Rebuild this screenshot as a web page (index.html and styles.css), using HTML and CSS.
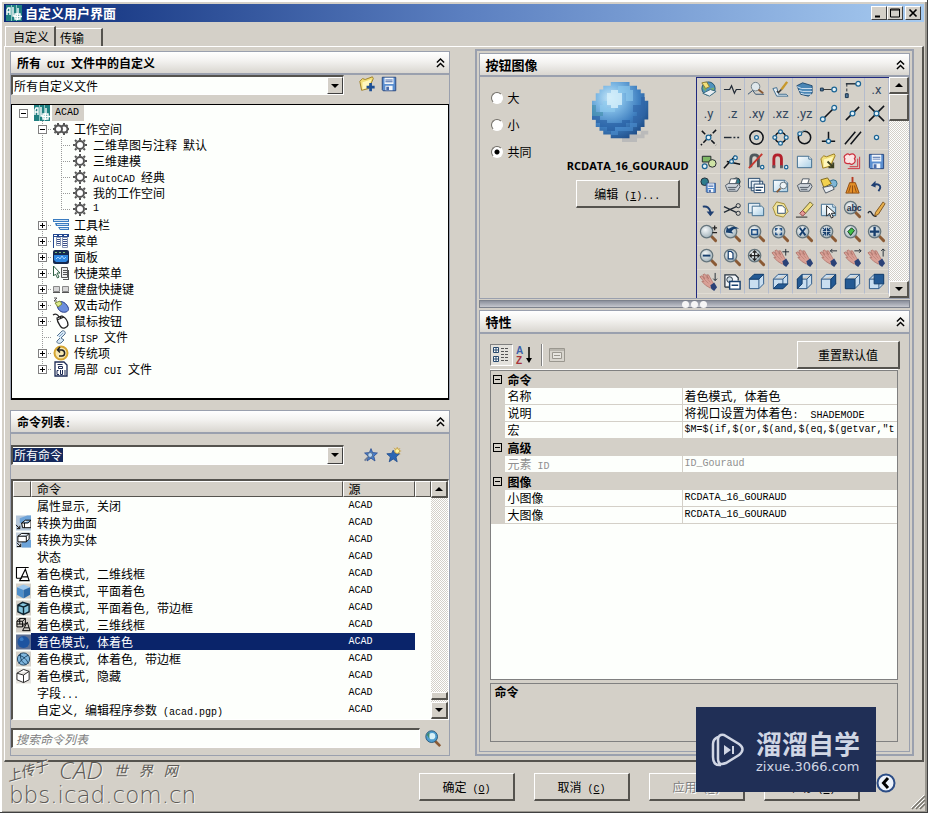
FILE: index.html
```html
<!DOCTYPE html>
<html lang="zh-CN">
<head>
<meta charset="utf-8">
<title>自定义用户界面</title>
<link rel="stylesheet" href="styles.css">
</head>
<body>
<svg class="defs" aria-hidden="true">
  <defs>
    <radialGradient id="ball" cx=".32" cy=".28" r=".8"><stop offset="0" stop-color="#c4e6f8"/><stop offset=".3" stop-color="#7db8e4"/><stop offset=".65" stop-color="#3f7fc0"/><stop offset="1" stop-color="#1f4d88"/></radialGradient>
    <radialGradient id="glass" cx=".4" cy=".35" r=".7"><stop offset="0" stop-color="#f4f7f8"/><stop offset="1" stop-color="#9fb0b8"/></radialGradient>
    <linearGradient id="sheet" x1="0" y1="0" x2="1" y2="1"><stop offset="0" stop-color="#fff"/><stop offset="1" stop-color="#a9cfe6"/></linearGradient>
  </defs>
  <symbol id="acad" viewBox="0 0 16 16"><path fill="#1f7f80" d="M0 0h16v16H0z"/><path fill="#8cc5c2" d="M5 0h1v16H5zM10 0h1v16h-1z"/><path fill="none" stroke="#fff" stroke-width="1.400" d="M1 10V5l1-2h2v7M1 7h3M7 2v9h3M12 3v5M9 9h5v5H9zM11.500 8v7M8 11.500h8"/></symbol>
  <symbol id="gear" viewBox="0 0 16 16"><circle cx="8" cy="8" r="4" fill="#fff" stroke="#555" stroke-width="2"/><path stroke="#555" stroke-width="2" d="M8 1v2M8 13v2M1 8h2M13 8h2M3 3l1.500 1.500M11.500 11.500L13 13M13 3l-1.500 1.500M4.500 11.500L3 13"/></symbol>
  <symbol id="lens" viewBox="0 0 20 20"><path stroke="#8a5a35" stroke-width="3" stroke-linecap="round" d="M13 13l4.500 4.500"/><circle cx="8" cy="8" r="6.500" fill="url(#glass)" stroke="#64747c" stroke-width="1.300"/></symbol>
  <symbol id="hand" viewBox="0 0 20 20"><path fill="#d9a096" stroke="#a8685f" stroke-width=".7" d="M1 5l2-1 3 3-2-4 2-1 4 5-2-4 2 0 4 7 2 3-4 4-5-3-4-4 2 0z"/><path stroke="#b0756c" stroke-width=".6" fill="none" d="M4 6l6 6M7 5l5 6"/><path fill="#2b4277" stroke="none" d="M12 14l4-3 3 5-3 4-3-2z"/></symbol>
  <symbol id="page" viewBox="0 0 20 20"><path fill="url(#sheet)" stroke="#3d6a8d" d="M2.500 4.500h12l3 3v9h-15z"/><path fill="#fff" stroke="#3d6a8d" d="M14.500 4.500v3h3"/></symbol>
  <symbol id="cube" viewBox="0 0 20 20"><path fill="#c9def0" stroke="#2b5787" d="M2.500 7.500l5-5h10v10l-5 5h-10zM2.500 7.500h10l5-5M12.500 7.500v10"/></symbol>
  <symbol id="bluecube" viewBox="0 0 16 16"><path fill="#9cc8ee" d="M1 4l7-3 7 3-7 3z"/><path fill="#4e8fcb" d="M1 4l7 3v9l-7-4z"/><path fill="#2c6aa9" d="M15 4L8 7v9l7-4z"/></symbol>
  <symbol id="printer" viewBox="0 0 20 20"><path fill="#fff" stroke="#4c5561" d="M6 9l2-6h7l-2 6"/><path fill="#cfd5dc" stroke="#4c5561" d="M2.500 10l3-2h11l1.500 3-3 5h-10z"/><path fill="none" stroke="#4c5561" d="M5 12h9l2-3M6 14h7"/></symbol>
  <symbol id="disk" viewBox="0 0 20 20"><path fill="#5b8fd0" stroke="#23427c" d="M2.500 2.500h15v15h-14l-1-1z"/><path fill="#f2f6fb" stroke="none" d="M5 3h10v7H5zM6 12h8v5H6z"/><path fill="#4a6cab" stroke="none" d="M7 13h3v4H7zM6 5h8v1H6zM6 7h8v1H6z"/></symbol>
  <symbol id="folder" viewBox="0 0 20 20"><path fill="#f2df7a" stroke="#9b7b1f" d="M2 7l3-3 3 1 8-3 1 2-5 11-8 2z"/><path fill="#fff7bd" stroke="none" d="M5 8l10-3-4 9-6 2z"/></symbol>
  <symbol id="globe" viewBox="0 0 20 20"><circle cx="10" cy="9" r="7" fill="#4f93bd" stroke="#24546f"/><path fill="#76b06b" stroke="none" d="M5 5l4-2 2 3-3 2-1 4-3-3zM12 9l4-1-1 5-3 1z"/></symbol>
  <symbol id="chev" viewBox="0 0 10 12"><path fill="none" stroke="#000" stroke-width="1.600" d="M1 6l4-4 4 4M1 11l4-4 4 4"/></symbol>
</svg>

<div class="window">
  <header class="titlebar">
    <svg class="i16"><use href="#acad"/></svg>
    <h1>自定义用户界面</h1>
    <div class="caption">
      <button type="button" aria-label="最小化"><svg viewBox="0 0 10 10"><path d="M1 8.500h5" stroke="#000" stroke-width="2"/></svg></button>
      <button type="button" aria-label="最大化"><svg viewBox="0 0 10 10"><path d="M.500 1h9v8h-9zM.500 2h9" fill="none" stroke="#000"/></svg></button>
      <button type="button" class="close" aria-label="关闭"><svg viewBox="0 0 10 10"><path d="M1.500 1.500l7 7M8.500 1.500l-7 7" stroke="#000" stroke-width="1.700"/></svg></button>
    </div>
  </header>

  <nav class="tabs" role="tablist">
    <button type="button" class="tab active" role="tab" aria-selected="true">自定义</button>
    <button type="button" class="tab" role="tab" aria-selected="false">传输</button>
  </nav>

  <main class="sheet">
    <div class="left">
      <section class="group files">
        <div class="head"><h2>所有<span class="en"> CUI </span>文件中的自定义</h2><button type="button" class="fold" aria-label="折叠"><svg><use href="#chev"/></svg></button></div>
        <div class="bar">
          <div class="combo"><select aria-label="自定义文件"><option>所有自定义文件</option></select><span class="drop"></span></div>
          <button type="button" class="tool" aria-label="打开"><svg class="i18" viewBox="0 0 20 20"><use href="#folder"/><path stroke="#1d4f95" stroke-width="3" d="M14 9v9M9.500 13.500h9"/></svg></button>
          <button type="button" class="tool" aria-label="保存"><svg class="i18"><use href="#disk"/></svg></button>
        </div>
        <div class="tree" role="tree">
          <div class="row"><i class="g"><b class="box"></b></i><svg><use href="#acad"/></svg><span class="en sel">ACAD</span></div>
          <div class="row"><i class="g v h"><b class="box"></b></i><svg viewBox="0 0 16 16"><g fill="#fff" stroke="#555" stroke-width="2"><circle cx="11" cy="8" r="3.500"/><circle cx="5.500" cy="8" r="3.500"/><path fill="none" d="M5 2v2M5 12v2M11 2v2M11 12v2M0 8h2M14 8h2M1.500 4l1 1M1.500 12l1-1M14.500 4l-1 1M14.500 12l-1-1"/></g></svg><span>工作空间</span></div>
          <div class="row"><i class="g v"></i><i class="g v h"></i><svg><use href="#gear"/></svg><span>二维草图与注释<span class="en"> </span>默认</span></div>
          <div class="row"><i class="g v"></i><i class="g v h"></i><svg><use href="#gear"/></svg><span>三维建模</span></div>
          <div class="row"><i class="g v"></i><i class="g v h"></i><svg><use href="#gear"/></svg><span><span class="en">AutoCAD </span>经典</span></div>
          <div class="row"><i class="g v"></i><i class="g v h"></i><svg><use href="#gear"/></svg><span>我的工作空间</span></div>
          <div class="row"><i class="g v"></i><i class="g v h last"></i><svg><use href="#gear"/></svg><span class="en">1</span></div>
          <div class="row"><i class="g v h"><b class="box plus"></b></i><svg viewBox="0 0 16 16"><path fill="#3a7cc0" d="M0 2h16v3H0zM2 6h14v3H3zM5 10h11v3H7z"/><path stroke="#cfe2f4" d="M1 3.500h14M4 7.500h11M7 11.500h8"/></svg><span>工具栏</span></div>
          <div class="row"><i class="g v h"><b class="box plus"></b></i><svg viewBox="0 0 16 16"><path fill="#21468f" d="M0 1h16v3H0zM0 3h1v12H0z"/><path fill="#fff" stroke="#8795b5" d="M3.500 4.500h4v8h-4zM9.500 4.500h5v10h-5z"/><path stroke="#3b4f86" d="M4 6.500h3M4 8.500h3M4 10.500h3M10 6.500h4M10 8.500h4M10 10.500h4M10 12.500h4"/><path stroke="#fff" stroke-dasharray="3 2" d="M1 2.500h14"/></svg><span>菜单</span></div>
          <div class="row"><i class="g v h"><b class="box plus"></b></i><svg viewBox="0 0 16 16"><rect y="1" width="16" height="14" rx="2" fill="#16294f"/><path fill="#2f86e0" d="M1 6h14v5l-2 2H3l-2-2z"/><path stroke="#7cc07a" stroke-dasharray="2 2" d="M2 3.500h12"/><path stroke="#9ed0ff" fill="none" d="M3 10l2-2 2 2 2-3 2 3 2-2"/></svg><span>面板</span></div>
          <div class="row"><i class="g v h"><b class="box plus"></b></i><svg viewBox="0 0 16 16"><path fill="#fff" stroke="#2f5f43" d="M.500 1v10l2-2 2 4 1.500-1-2-4h3z"/><path fill="#eee" stroke="#555" d="M8.500 2.500h6v10h-6z"/><path stroke="#555" d="M10 5.500h4M10 7.500h4M10 9.500h4M10 14.500h6M15.500 5v10"/></svg><span>快捷菜单</span></div>
          <div class="row"><i class="g v h"><b class="box plus"></b></i><svg viewBox="0 0 16 16"><path fill="#d7d7d7" stroke="#888" d="M.500 5.500h6v5h-6zM9.500 5.500h6v5h-6z"/><path stroke="#555" d="M0 11.500h7M9 11.500h7"/></svg><span>键盘快捷键</span></div>
          <div class="row"><i class="g v h"><b class="box plus"></b></i><svg viewBox="0 0 16 16"><path fill="none" stroke="#555" d="M1 1h3L1 4h3"/><path fill="#6d8fdc" stroke="#2c4189" d="M4 7c2-4 8-3 11 3 2 4-2 6-6 5-3-1-5-4-5-8z"/><path fill="#dcea8a" stroke="#7d8c3a" d="M2 6l5-2 2 3-4 3z"/></svg><span>双击动作</span></div>
          <div class="row"><i class="g v h"><b class="box plus"></b></i><svg viewBox="0 0 16 16"><path fill="#fff" stroke="#222" stroke-width="1.300" d="M4 5l5-2c4 2 6 6 6 9-1 3-5 4-7 2-2-3-4-5-4-9z"/><path fill="none" stroke="#222" stroke-width="1.300" d="M4 7l7-3M7 3l1 3M0 2c3-2 5 0 6 2"/></svg><span>鼠标按钮</span></div>
          <div class="row"><i class="g v h"></i><svg viewBox="0 0 16 16"><path fill="#d8e8f5" stroke="#53718e" d="M4 7l5-5c2-1 4 1 3 3L8 9l3 2-3 3c-2 1-5 0-4-2l3-3"/><path stroke="#7da3c5" d="M6 8l4-4"/></svg><span><span class="en">LISP </span>文件</span></div>
          <div class="row"><i class="g v h"><b class="box plus"></b></i><svg viewBox="0 0 16 16"><circle cx="8" cy="8" r="6.500" fill="#f7e8b2" stroke="#d5a531" stroke-width="2"/><path fill="none" stroke="#222" stroke-width="1.500" d="M5 5h4c4 1 3 6 0 6H6M7 2L4.500 5 7 7.500"/></svg><span>传统项</span></div>
          <div class="row"><i class="g v h last"><b class="box plus"></b></i><svg viewBox="0 0 16 16"><path fill="#fff" stroke="#1c2b55" stroke-width="1.300" d="M2 1h9l3 3v11H2z"/><path fill="none" stroke="#1c2b55" d="M4.500 3.500h5M5.500 5.500h4v2h-4zM5.500 9.500h-1.500v4h2M7.500 9v4.500h2V9M12 9v5"/></svg><span>局部<span class="en"> CUI </span>文件</span></div>
        </div>
      </section>

      <section class="group commands">
        <div class="head"><h2>命令列表<span class="en">:</span></h2><button type="button" class="fold" aria-label="折叠"><svg><use href="#chev"/></svg></button></div>
        <div class="bar tall">
          <div class="combo focus"><select aria-label="命令类别"><option>所有命令</option></select><span class="drop"></span></div>
          <button type="button" class="tool" aria-label="查找"><svg class="i16" viewBox="0 0 20 20"><path fill="#4a7fca" stroke="#2b4c91" d="M10 2l2 5 6 .5-4.500 4 1.500 6-5-3.500-5 3.500 1.500-6L2 7.500 8 7z"/><circle cx="9" cy="10" r="3" fill="#b9d7f2" stroke="#4b5f7c"/><path stroke="#6b7a94" stroke-width="2" d="M6 13l-4 4"/></svg></button>
          <button type="button" class="tool" aria-label="新建"><svg class="i16" viewBox="0 0 20 20"><path fill="#2b66b4" stroke="#1f4b8c" d="M9 4l2 4 6 .5-4.500 4 1.500 6-5-3.500-5 3.500 1.500-6L1 8.500 7 8z"/><circle cx="14" cy="5" r="3" fill="#fff3a0" stroke="#c39a37"/><path stroke="#c39a37" d="M14 0v2M19 5h-2M17.500 1.500L16 3M10 1l2 2M18 9l-2-2"/></svg></button>
        </div>
        <div class="list">
          <table>
            <colgroup><col class="c-icon"><col><col class="c-src"><col class="c-pad"></colgroup>
            <thead><tr><th></th><th>命令</th><th>源</th><th></th></tr></thead>
            <tbody>
              <tr><td></td><td>属性显示<span class="en">, </span>关闭</td><td class="en">ACAD</td><td></td></tr>
              <tr><td><svg viewBox="0 0 16 16"><path fill="#b5c7da" d="M0 0h16v16H0z"/><path fill="#6ca3d8" d="M4 3l8-3h4v8H4z"/><path fill="#fff" stroke="#000" d="M6 8l4-3h6v8H7zM6 8h7l3-3M9 8v5M0 10l4 4M1 14h3v-3"/></svg></td><td>转换为曲面</td><td class="en">ACAD</td><td></td></tr>
              <tr><td><svg viewBox="0 0 16 16"><path fill="#c2cedb" d="M0 0h16v16H0z"/><path fill="#6ca3d8" d="M6 8h10v8H6z"/><path fill="#fff" stroke="#000" d="M2 4l4-3h8v6l-3 3H2zM2 4h9l3-3M11 4v6M1 11l4 4M1 15h4v-3"/></svg></td><td>转换为实体</td><td class="en">ACAD</td><td></td></tr>
              <tr><td></td><td>状态</td><td class="en">ACAD</td><td></td></tr>
              <tr><td><svg viewBox="0 0 16 16"><path fill="#fff" stroke="#000" stroke-width="1.200" d="M.500 12.500V1h13M.500 12.500h6M4 15L10 3l4 12zM6 11h7"/></svg></td><td>着色模式<span class="en">, </span>二维线框</td><td class="en">ACAD</td><td></td></tr>
              <tr><td><svg viewBox="0 0 16 16"><path fill="#d4d0c8" d="M0 0h16v16H0z"/><use href="#bluecube"/></svg></td><td>着色模式<span class="en">, </span>平面着色</td><td class="en">ACAD</td><td></td></tr>
              <tr><td><svg viewBox="0 0 16 16"><path fill="#d4d0c8" d="M0 0h16v16H0z"/><path fill="#85c4dc" stroke="#0e2430" stroke-width="1.500" d="M2 5l5-3 7 2v8l-6 3-6-3zM2 5l6 2v8M8 7l6-3"/></svg></td><td>着色模式<span class="en">, </span>平面着色<span class="en">, </span>带边框</td><td class="en">ACAD</td><td></td></tr>
              <tr><td><svg viewBox="0 0 16 16"><path fill="#d4d0c8" d="M0 0h16v16H0z"/><path fill="none" stroke="#000" d="M1 4l3-3h6v6l-3 3H1zM1 4h6l3-3M7 4v6M4 1v6H1M4 7h6M7 14l5-9 3 9zM9 11h5"/></svg></td><td>着色模式<span class="en">, </span>三维线框</td><td class="en">ACAD</td><td></td></tr>
              <tr class="current"><td><svg viewBox="0 0 16 16"><path fill="#5d6f92" d="M0 0h16v16H0z"/><circle cx="8" cy="8" r="6.500" fill="#1d54a0"/><circle cx="6" cy="5" r="2" fill="#3d7cc4"/></svg></td><td>着色模式<span class="en">, </span>体着色</td><td class="en">ACAD</td><td></td></tr>
              <tr><td><svg viewBox="0 0 16 16"><path fill="#d4d0c8" d="M0 0h16v16H0z"/><circle cx="8" cy="8" r="6.500" fill="#7fb6de" stroke="#1c4262"/><path fill="none" stroke="#1c4262" d="M3 4c5 1 9 5 10 9M13 4c-4 2-8 5-10 9M5 2c-1 5 1 10 6 12"/></svg></td><td>着色模式<span class="en">, </span>体着色<span class="en">, </span>带边框</td><td class="en">ACAD</td><td></td></tr>
              <tr><td><svg viewBox="0 0 16 16"><path fill="#e6e4df" d="M0 0h16v16H0z"/><path fill="#fff" stroke="#222" d="M1 5l7-4 6 2v9l-6 3-7-3zM1 5l7 2 6-4M8 7v8"/></svg></td><td>着色模式<span class="en">, </span>隐藏</td><td class="en">ACAD</td><td></td></tr>
              <tr><td></td><td>字段<span class="en">...</span></td><td class="en">ACAD</td><td></td></tr>
              <tr><td></td><td>自定义<span class="en">, </span>编辑程序参数<span class="en"> (acad.pgp)</span></td><td class="en">ACAD</td><td></td></tr>
            </tbody>
          </table>
          <div class="scroll end"><span class="arrow up"></span><span class="thumb"></span><span class="arrow down"></span></div>
        </div>
        <div class="search">
          <input type="text" placeholder="搜索命令列表" aria-label="搜索命令列表">
          <button type="button" class="tool" aria-label="搜索"><svg class="i18" viewBox="0 0 20 20"><path stroke="#8a5a35" stroke-width="3" d="M12 13l6 6"/><circle cx="8.500" cy="8.500" r="6.500" fill="#4f9ed0" stroke="#245476"/><circle cx="9" cy="8" r="3.500" fill="#d7f0f8"/><path fill="#3f8a72" d="M3 6l3-3v8z"/></svg></button>
        </div>
      </section>
    </div>

    <div class="right">
      <section class="group image">
        <div class="head"><h2>按钮图像</h2><button type="button" class="fold" aria-label="折叠"><svg><use href="#chev"/></svg></button></div>
        <div class="imgbody">
          <div class="radios">
            <label><input type="radio" name="size">大</label>
            <label><input type="radio" name="size">小</label>
            <label><input type="radio" name="size" checked>共同</label>
          </div>
          <div class="preview">
            <svg class="sphere" viewBox="0 0 64 64"><path fill="#a9acb0" opacity=".6" d="M32 56h20v-4h8v4h-4v4h-8v4H32z"/><path fill="url(#ball)" d="M20 0h20v4h8v4h4v4h4v8h4v20h-4v8h-4v4h-4v4h-8v4H20v-4h-8v-4H8v-4H4v-8H0V20h4v-8h4V8h4V4h8z"/><g shape-rendering="crispEdges"><path fill="#d6f0fb" opacity=".8" d="M20 8h8v4h4v12h-4v4h-8v-4h-4V12h4z"/><path fill="#8fcbee" opacity=".6" d="M28 4h12v4h4v12h-8v-8h-8zM12 20h4v8h8v4H8v-8h4z"/><path fill="#245a9f" opacity=".6" d="M0 36h8v4h8v4h16v-4h8v4h-4v4H24v4h-8v-4H8v-4H4v-4H0z"/><path fill="#3a8aa0" opacity=".5" d="M0 24h4v8h8v4H0z"/><path fill="#2f63a5" opacity=".6" d="M44 24h8v-8h4v20h-4v8h-8v-8h4v-4h-4z"/><path fill="#4d90d0" opacity=".6" d="M24 48h16v-4h8v4h-4v4H28v4h-8v-4h4z"/></g></svg>
            <p class="name">RCDATA_16_GOURAUD</p>
            <button type="button" class="btn edit">编辑<span class="en"> (<u>I</u>)...</span></button>
          </div>
          <div class="palette">
            <button type="button"><svg viewBox="0 0 20 20"><use href="#globe"/><path fill="#f2df7a" stroke="#8b7b35" d="M3 3l5-1 3 5-4 2z"/><path fill="#e8eef2" stroke="#3a6a80" d="M4 14l8-4 6 2-7 5z"/></svg></button>
            <button type="button"><svg viewBox="0 0 20 20"><path stroke-width="1.300" d="M1 10h6l2-4 3 8 2-4h5"/></svg></button>
            <button type="button"><svg viewBox="0 0 20 20"><circle cx="9" cy="7" r="4.500" fill="#dfe8ec" stroke="#6d7d86"/><path stroke="#8a5a35" stroke-width="2" d="M12 10l5 4"/><path stroke="#34506e" d="M1 15l5-4 3 4h9"/></svg></button>
            <button type="button"><svg viewBox="0 0 20 20"><path fill="#e7f0f6" stroke="#3d6a8d" d="M2 9l4-1 2 7h8l2 2H6z"/><path stroke="#c7982c" stroke-width="2.500" d="M17 2l-6 8"/><path stroke="#333" stroke-width="1.500" d="M11 10l-3 3-2-1"/></svg></button>
            <button type="button"><svg viewBox="0 0 20 20"><path fill="#4a86b5" stroke="#224c72" d="M2 6l6-3 10 3v8l-4 3-8-2z"/><path stroke="#d7e7f2" d="M2 7l5 2h11M4 11l4 1h10M6 14l4 1h7"/></svg></button>
            <button type="button"><svg viewBox="0 0 20 20"><path d="M3 10h12" stroke="#333"/><path fill="#4d7598" stroke="#17324c" d="M1.500 8.500h3v3h-3z"/><circle class="n" cx="16" cy="10" r="2.500"/></svg></button>
            <button type="button"><svg viewBox="0 0 20 20"><path stroke-dasharray="3 2" d="M4 4v11"/><path stroke-width="1.500" d="M3 4h12"/><path fill="#4d7598" stroke="#17324c" d="M2.500 14.500h3v4h-3z"/><circle class="n" cx="16" cy="4" r="2.500"/></svg></button>
            <button type="button">.x</button>

            <button type="button">.y</button>
            <button type="button">.z</button>
            <button type="button">.xy</button>
            <button type="button">.xz</button>
            <button type="button">.yz</button>
            <button type="button"><svg viewBox="0 0 20 20"><path class="k" d="M5 15L15 5"/><circle class="n" cx="4" cy="16" r="2.500"/><circle class="n" cx="16" cy="4" r="2.500"/></svg></button>
            <button type="button"><svg viewBox="0 0 20 20"><path class="k" d="M3 17L17 3"/><circle class="n" cx="10" cy="10" r="2.500"/></svg></button>
            <button type="button"><svg viewBox="0 0 20 20"><path class="k" d="M2 2l16 16M18 2L2 18"/><circle class="n" cx="10" cy="10" r="2.500"/></svg></button>

            <button type="button"><svg viewBox="0 0 20 20"><path class="k" stroke-dasharray="5 2" d="M3 3l15 15M18 2L2 18"/><circle class="n" cx="10" cy="10" r="2.500"/></svg></button>
            <button type="button"><svg viewBox="0 0 20 20"><path d="M1 10h8" stroke-width="1.500"/><path stroke-dasharray="2 2" stroke-width="1.500" d="M11 10h8"/></svg></button>
            <button type="button"><svg viewBox="0 0 20 20"><circle class="k" cx="10" cy="10" r="7"/><circle class="n" cx="10" cy="10" r="2"/></svg></button>
            <button type="button"><svg viewBox="0 0 20 20"><circle class="k" cx="10" cy="10" r="5.500"/><circle class="n" cx="10" cy="4" r="2"/><circle class="n" cx="10" cy="16" r="2"/><circle class="n" cx="4" cy="10" r="2"/><circle class="n" cx="16" cy="10" r="2"/></svg></button>
            <button type="button"><svg viewBox="0 0 20 20"><circle class="k" cx="10" cy="10" r="6.500"/><circle class="n" cx="5" cy="6" r="2"/><path stroke="#7fb0c6" d="M5 5l6-3"/></svg></button>
            <button type="button"><svg viewBox="0 0 20 20"><path class="k" d="M3 14h14M10 4v8"/><circle class="n" cx="10" cy="14" r="2.200"/></svg></button>
            <button type="button"><svg viewBox="0 0 20 20"><path class="k" d="M2 17L13 4M8 17L19 4"/></svg></button>
            <button type="button"><svg viewBox="0 0 20 20"><circle class="n" cx="10" cy="10" r="2.200"/></svg></button>

            <button type="button"><svg viewBox="0 0 20 20"><path fill="#7fb865" stroke="#20242a" d="M3.500 4.500h9v6h-9z"/><circle cx="14" cy="12" r="4" fill="#cfe3a5" stroke="#20242a"/><circle class="n" cx="6" cy="15" r="2.500"/></svg></button>
            <button type="button"><svg viewBox="0 0 20 20"><path stroke="#10141a" stroke-width="1.600" d="M1 17L13 4M4 10l14 3"/><circle class="n" cx="13" cy="6" r="2"/><circle class="n" cx="9" cy="10" r="2"/></svg></button>
            <button type="button"><svg viewBox="0 0 20 20"><path stroke="#4e575c" stroke-width="3" d="M4 16V7q0-4 4-4t4 4v9"/><path stroke="#c5372f" stroke-width="2" d="M2 17L16 2"/><circle class="n" cx="16" cy="16" r="1.800"/></svg></button>
            <button type="button"><svg viewBox="0 0 20 20"><path stroke="#b3202a" stroke-width="3" d="M3 16V7q0-4 4-4t4 4v9"/><path stroke="#5c6166" stroke-width="3" d="M3 14v3M11 14v3"/><circle class="n" cx="16" cy="16" r="1.800"/></svg></button>
            <button type="button"><svg><use href="#page"/></svg></button>
            <button type="button"><svg viewBox="0 0 20 20"><use href="#folder"/><path stroke="#3c3f20" stroke-width="2" d="M9 10l6 6M15 11v5h-5"/></svg></button>
            <button type="button"><svg viewBox="0 0 20 20"><path stroke="#cc2f3d" d="M17.500 5v12.500H5M15.500 7v8.500H7"/><path fill="#fbe4e4" stroke="#cc2f3d" stroke-width="1.300" d="M3 3q2-2 4 0 3-2 5 0 2 2 0 4 2 3-1 5-2 2-4 0-3 1-5-1-1-2 0-4-2-2 1-4z"/></svg></button>
            <button type="button"><svg><use href="#disk"/></svg></button>

            <button type="button"><svg viewBox="0 0 20 20"><circle cx="6" cy="6" r="4" fill="#2d7c8c"/><svg x="6" y="6" width="13" height="13"><use href="#disk"/></svg></svg></button>
            <button type="button"><svg viewBox="0 0 20 20"><circle cx="14" cy="6" r="4" fill="#2d7c8c"/><use href="#printer"/></svg></button>
            <button type="button"><svg viewBox="0 0 20 20"><path fill="#e4edf4" stroke="#26486c" d="M1.500 2.500h12v10h-12zM4.500 5.500h12v10h-12z"/><path fill="#fff" stroke="#26486c" d="M7.500 8.500h11v9h-11z"/><path stroke="#26486c" stroke-width="1.500" d="M9 12h8M9 15h6"/></svg></button>
            <button type="button"><svg viewBox="0 0 20 20"><use href="#page"/><circle cx="13" cy="10" r="3.500" fill="#eef4f7" stroke="#66757d"/><path stroke="#8a5a35" stroke-width="2" d="M10 13l-4 4"/></svg></button>
            <button type="button"><svg><use href="#printer"/></svg></button>
            <button type="button"><svg viewBox="0 0 20 20"><circle cx="15" cy="8" r="4" fill="#7fb6d6" stroke="#2d6a86"/><path fill="#f2d14f" stroke="#7d661b" d="M2 4l7-2 4 6-8 4z"/><path fill="#e9edf1" stroke="#4c5561" d="M4 12l10-2 2 4-9 4z"/></svg></button>
            <button type="button"><svg viewBox="0 0 20 20"><path stroke="#b63b22" stroke-width="2" d="M10 1v6"/><path fill="#e38f28" stroke="#8e4c12" d="M7 7h6l4 11H3z"/><path stroke="#8e4c12" d="M8 10L6 17M10 10v8M12 10l2 7"/></svg></button>
            <button type="button"><svg viewBox="0 0 20 20"><path stroke="#1f3f72" stroke-width="2" d="M12 16q4-5 0-7-3-1-5 1"/><path fill="#1f3f72" stroke="none" d="M4 10l5-5v7z"/></svg></button>

            <button type="button"><svg viewBox="0 0 20 20"><path stroke="#1f3f72" stroke-width="2" d="M4 7q7-1 8 6"/><path fill="#1f3f72" stroke="none" d="M8 12h8l-4 5z"/></svg></button>
            <button type="button"><svg viewBox="0 0 20 20"><path stroke-width="1.300" d="M1 7l13 6M1 13l13-6"/><circle cx="16" cy="6" r="2.200"/><circle cx="16" cy="14" r="2.200"/></svg></button>
            <button type="button"><svg viewBox="0 0 20 20"><path fill="#e4edf4" stroke="#3d6a8d" d="M1.500 3.500h12v10h-12z"/><path fill="url(#sheet)" stroke="#3d6a8d" d="M5.500 6.500h10l2 2v8h-12z"/></svg></button>
            <button type="button"><svg viewBox="0 0 20 20"><path fill="#f0e39c" stroke="#a28b32" d="M6 2l8 2 4 8-5 6-8-2-3-8z"/><path fill="#fff" stroke="#34506e" d="M7 6h5l3 3v5H7z"/></svg></button>
            <button type="button"><svg viewBox="0 0 20 20"><path stroke="#222" d="M1 18h12"/><path fill="#f0dd80" stroke="#6d6630" d="M8 11l8-9 3 3-8 9z"/><path fill="#e79a98" stroke="#8c4543" d="M5 14l3-3 3 3-3 3z"/></svg></button>
            <button type="button"><svg viewBox="0 0 20 20"><use href="#page"/><path fill="#fff" stroke="#222" d="M8 6v11l3-3 2 5 2-1-2-4h4z"/></svg></button>
            <button type="button"><svg viewBox="0 0 20 20"><use href="#lens"/><text x="4" y="12" class="abc">abc</text></svg></button>
            <button type="button"><svg viewBox="0 0 20 20"><path stroke-width="1.500" d="M1 14q2-4 4 0t5 3"/><path fill="#e9b04c" stroke="#7d5420" d="M9 13l8-11 2 2-7 11-4 2z"/></svg></button>

            <button type="button"><svg viewBox="0 0 20 20"><use href="#lens"/><path stroke="#222" stroke-width="1.300" d="M14 4h5M16.500 1.500v5M14 9h5"/></svg></button>
            <button type="button"><svg viewBox="0 0 20 20"><use href="#lens"/><path fill="#173f6e" stroke="none" d="M3 9l1-6 2 2q6-4 11 0-6-1-8 3l2 2z"/></svg></button>
            <button type="button"><svg viewBox="0 0 20 20"><use href="#lens"/><path stroke="#1f4f86" stroke-width="1.500" d="M5 6h6v5H5z"/></svg></button>
            <button type="button"><svg viewBox="0 0 20 20"><use href="#lens"/><path stroke="#1f4f86" stroke-width="1.500" d="M5 7V5h2M9 5h2v2M11 9v2H9M7 11H5V9"/></svg></button>
            <button type="button"><svg viewBox="0 0 20 20"><use href="#lens"/><path stroke="#173f6e" stroke-width="2" d="M5 4l6 8M11 4l-6 8"/></svg></button>
            <button type="button"><svg viewBox="0 0 20 20"><use href="#lens"/><path stroke="#173f6e" stroke-width="1.200" d="M4 4l3 3M12 4L9 7M4 12l3-3M12 12L9 9M4 7h3V4M9 4v3h3M4 9h3v3M9 12V9h3"/></svg></button>
            <button type="button"><svg viewBox="0 0 20 20"><use href="#lens"/><path fill="#3fbf4a" stroke="#10351a" d="M5 8l4-4 3 3-4 5z"/></svg></button>
            <button type="button"><svg viewBox="0 0 20 20"><use href="#lens"/><path stroke="#173f6e" stroke-width="2.500" d="M3 8h10M8 3v10"/></svg></button>

            <button type="button"><svg viewBox="0 0 20 20"><use href="#lens"/><path stroke="#173f6e" stroke-width="2" d="M4 8h8"/></svg></button>
            <button type="button"><svg viewBox="0 0 20 20"><use href="#lens"/><path fill="#fff" stroke="#173f6e" stroke-width="1.300" d="M5.500 3.500h3l2 2v6h-5z"/></svg></button>
            <button type="button"><svg viewBox="0 0 20 20"><use href="#lens"/><path stroke="#222" stroke-width="1.200" d="M3 8h10M8 3v10M6 5l2-2 2 2M6 11l2 2 2-2M5 6L3 8l2 2M11 6l2 2-2 2"/></svg></button>
            <button type="button"><svg viewBox="0 0 20 20"><use href="#hand"/><path d="M12 4h7M15.500 1v7"/></svg></button>
            <button type="button"><svg><use href="#hand"/></svg></button>
            <button type="button"><svg viewBox="0 0 20 20"><use href="#hand"/><path d="M12 3h7M14 1l-2 2 2 2"/></svg></button>
            <button type="button"><svg viewBox="0 0 20 20"><use href="#hand"/><path d="M12 3h7M17 1l2 2-2 2"/></svg></button>
            <button type="button"><svg viewBox="0 0 20 20"><use href="#hand"/><path d="M17 1v8M15 3l2-2 2 2"/></svg></button>

            <button type="button"><svg viewBox="0 0 20 20"><use href="#hand"/><path d="M17 1v8M15 7l2 2 2-2"/></svg></button>
            <button type="button"><svg viewBox="0 0 20 20"><path fill="#f2f5f8" stroke="#23303d" stroke-width="1.300" d="M2 16V3h11l3 3v3M2 16h5"/><circle cx="7" cy="8" r="3" fill="#cfdde6" stroke="#23303d"/><path fill="#fff" stroke="#173f6e" stroke-width="1.500" d="M7 10h11v8H7zM9 14h7"/></svg></button>
            <button type="button"><svg viewBox="0 0 20 20"><use href="#cube"/><path class="f" d="M2.500 7.500l5-5h10l-5 5z"/></svg></button>
            <button type="button"><svg viewBox="0 0 20 20"><use href="#cube"/><path class="f" d="M2.500 17.500l5-5h10l-5 5z"/></svg></button>
            <button type="button"><svg viewBox="0 0 20 20"><use href="#cube"/><path class="f" d="M2.500 7.500l5-5v10l-5 5z"/></svg></button>
            <button type="button"><svg viewBox="0 0 20 20"><use href="#cube"/><path class="f" d="M12.500 7.500l5-5v10l-5 5z"/></svg></button>
            <button type="button"><svg viewBox="0 0 20 20"><use href="#cube"/><path class="f" d="M2.500 7.500h10v10h-10z"/></svg></button>
            <button type="button"><svg viewBox="0 0 20 20"><use href="#cube"/><path class="f" d="M7.500 2.500h10v10h-10z"/></svg></button>
          </div>
          <div class="scroll"><span class="arrow up"></span><span class="thumb big"></span><span class="arrow down"></span></div>
        </div>
      </section>

      <div class="splitter"><i></i><i></i><i></i></div>

      <section class="group props">
        <div class="head"><h2>特性</h2><button type="button" class="fold" aria-label="折叠"><svg><use href="#chev"/></svg></button></div>
        <div class="propbody">
          <div class="ptools">
            <button type="button" class="pt on" aria-label="按分类"><svg viewBox="0 0 20 20"><path fill="#fff" stroke="#26486c" d="M2.500 2.500h5v5h-5zM2.500 11.500h5v5h-5z"/><path stroke="#26486c" d="M3 5h4M5 3v4M3 14h4M5 12v4"/><path stroke="#555" stroke-dasharray="3 1" d="M10 3.500h8M10 6.500h8M10 9.500h8M10 12.500h8M10 15.500h8"/></svg></button>
            <button type="button" class="pt" aria-label="按字母"><svg viewBox="0 0 20 20"><text x="2" y="9" class="la">A</text><text x="2" y="19" class="lz">Z</text><path stroke="#000" stroke-width="1.500" d="M15 2v14"/><path d="M12 13h6l-3 5z"/></svg></button>
            <span class="sep"></span>
            <button type="button" class="pt" aria-label="属性页" disabled><svg viewBox="0 0 20 20"><path fill="#d8d5ce" stroke="#9a978f" d="M2.500 3.500h15v13h-15z"/><path fill="#e8e6e1" stroke="#9a978f" d="M5.500 7.500h9v6h-9zM7 10.500h6M3 5h14"/></svg></button>
            <button type="button" class="btn reset">重置默认值</button>
          </div>
          <div class="pgrid">
            <table>
              <colgroup><col class="p-gut"><col class="p-name"><col></colgroup>
              <tbody>
                <tr class="cat"><th><b class="box"></b></th><th colspan="2">命令</th></tr>
                <tr><th></th><td>名称</td><td>着色模式<span class="en">, </span>体着色</td></tr>
                <tr><th></th><td>说明</td><td>将视口设置为体着色<span class="en">:  SHADEMODE</span></td></tr>
                <tr><th></th><td>宏</td><td class="en">$M=$(if,$(or,$(and,$(eq,$(getvar,"t</td></tr>
                <tr class="cat"><th><b class="box"></b></th><th colspan="2">高级</th></tr>
                <tr class="off"><th></th><td>元素<span class="en"> ID</span></td><td class="en">ID_Gouraud</td></tr>
                <tr class="cat"><th><b class="box"></b></th><th colspan="2">图像</th></tr>
                <tr><th></th><td>小图像</td><td class="en">RCDATA_16_GOURAUD</td></tr>
                <tr><th></th><td>大图像</td><td class="en">RCDATA_16_GOURAUD</td></tr>
              </tbody>
            </table>
          </div>
          <div class="desc">命令</div>
        </div>
      </section>
    </div>
  </main>

  <footer class="footer">
    <button type="button" class="btn">确定<span class="en"> (<u>O</u>)</span></button>
    <button type="button" class="btn">取消<span class="en"> (<u>C</u>)</span></button>
    <button type="button" class="btn" disabled>应用<span class="en"> (<u>A</u>)</span></button>
    <button type="button" class="btn">帮助<span class="en"> (<u>H</u>)</span></button>
    <button type="button" class="round" aria-label="收起"><svg viewBox="0 0 20 20"><circle cx="10" cy="10" r="8.500" fill="#eef3fb" stroke="#2b4c86" stroke-width="2"/><path fill="none" stroke="#000" stroke-width="3" d="M12 5l-4.500 5 4.500 5"/></svg></button>
  </footer>

  <div class="sign"><p class="script"><span class="tilt">上传于</span><span class="cad">CAD</span><span>世</span><span>界</span><span>网</span></p><p class="site">bbs.icad.com.cn</p></div>
  <div class="badge">
    <svg viewBox="0 0 36 36"><path fill="none" stroke="#d0d6e4" stroke-width="2.500" d="M8 8q0-6 6-5l15 9q7 5 0 11l-13 8q-8 3-8-4zM8 5q-5 2-5 7v13q0 9 8 8"/><path fill="#d0d6e4" d="M14 13l7 5-7 5zM22 14h2v8h-2z"/></svg>
    <div><strong>溜溜自学</strong><span>zixue.3066.com</span></div>
  </div>
  <svg class="grip" viewBox="0 0 14 14"><path stroke="#77746d" stroke-width="1.500" d="M1 14L14 1M5 14l9-9M9 14l5-5"/><path stroke="#fff" d="M0 13L13 0M4 13l9-9M8 13l5-5"/></svg>
</div>
</body>
</html>
```
FILE: styles.css
```css
:root {
  --face: #d4d0c8;
  --line: #9aa0ae;
  --dark: #55534e;
  --navy: #0a246a;
  --paper: #fdfffc;
}
* { box-sizing: border-box; }
body {
  margin: 0;
  background: var(--face);
  color: #000;
  font: 12px/16px "Noto Sans CJK SC", sans-serif;
}
h1, h2, p { margin: 0; }
button, input, select { font: inherit; color: inherit; margin: 0; padding: 0; }
button { border: 0; background: none; }
svg { display: block; flex: none; overflow: visible; }
.defs { position: absolute; width: 0; height: 0; }
.en { font-family: "Liberation Mono", monospace; font-size: 10px; white-space: pre; }
span.en { line-height: 1; }
.i16 { width: 16px; height: 16px; }
.i18 { width: 18px; height: 18px; }

.window {
  position: relative;
  display: flex;
  flex-direction: column;
  min-height: 100vh;
  padding: 4px 3px 2px 4px;
  border-right: 1px solid #404040;
  border-bottom: 1px solid #404040;
  box-shadow: inset 2px 2px #fff, inset -2px -1px #99968f;
}

.titlebar {
  display: flex;
  align-items: center;
  height: 18px;
  padding: 0 3px 0 2px;
  background: linear-gradient(90deg, #0a2a78, #5b7fc0 50%, #a6caf0);
  color: #fff;
}
.titlebar h1 { flex: 1; padding-left: 3px; font-size: 13px; line-height: 18px; }
.caption { display: flex; }
.caption button {
  width: 16px; height: 14px;
  display: grid; place-items: center;
  background: var(--face);
  border: 1px solid;
  border-color: #fff #404040 #404040 #fff;
}
.caption .close { margin-left: 2px; }
.caption svg { width: 10px; height: 10px; }

.tabs { display: flex; align-items: flex-end; height: 24px; padding-left: 1px; }
.tab {
  height: 18px;
  padding: 0 17px 0 4px;
  border: 1px solid;
  border-width: 1px 2px 0 0;
  border-color: #fff var(--dark) #fff #fff;
}
.tab.active { height: 20px; padding: 0 5px 0 7px; border-left-width: 1px; }

.sheet {
  flex: 1;
  display: grid;
  grid-template-columns: minmax(0, 1fr) minmax(0, 1fr);
  gap: 25px;
  padding: 4px 8px 4px 5px;
  border: 1px solid;
  border-width: 1px 2px 2px 1px;
  border-color: #fff var(--dark) var(--dark) #fff;
}
.left { display: flex; flex-direction: column; gap: 10px; }
.group { display: flex; flex-direction: column; border: 1px solid var(--line); }
.files { flex: 1; border-bottom: 0; }
.head {
  display: flex;
  align-items: center;
  justify-content: space-between;
  height: 23px;
  padding: 0 4px 0 6px;
  background: linear-gradient(#fff, #f4f3f1 40%, #d9d6d0);
  border-bottom: 2px solid var(--line);
}
.head h2 { font-size: 12px; line-height: 20px; }
.right .head h2 { font-size: 13px; }
.fold svg { width: 9px; height: 11px; }

.bar { display: flex; align-items: flex-start; height: 29px; }
.bar.tall { align-items: center; height: 45px; padding-bottom: 4px; }
.tool { margin-left: 4px; }
.combo + .tool { margin-left: 14px; }
.tall .combo + .tool { margin-left: 19px; }
.tall .tool { margin-left: 7px; }
.combo {
  display: flex;
  width: 76%;
  height: 20px;
  background: var(--paper);
  border: 1px solid;
  border-width: 2px 1px 1px 2px;
  border-color: var(--dark) #fff #fff var(--dark);
}
.combo select {
  flex: 1;
  align-self: center;
  appearance: none;
  height: 14px;
  border: 0;
  padding-left: 1px;
  background: none;
  line-height: 14px;
}
.combo.focus select { flex: none; background: #15295c; color: #fff; }
.drop {
  width: 16px;
  margin-left: auto;
  background: var(--face);
  border: 1px solid;
  border-color: #fff #404040 #404040 #fff;
  display: grid;
  place-items: center;
}
.drop::after, .arrow::after {
  content: "";
  border: 4px solid transparent;
  border-bottom-width: 0;
  border-top-color: #000;
}
.arrow.up::after { transform: rotate(180deg); }

.tree {
  flex: 1;
  padding-left: 2px;
  background: var(--paper);
  border: 1px solid #000;
  border-bottom-width: 2px;
}
.row { display: flex; align-items: center; height: 16px; }
.row + .row { padding-left: 19px; }
.row > svg { width: 16px; height: 16px; margin: 0 5px 0 1px; }
.row .sel { background: var(--face); margin-left: -3px; padding: 0 5px 0 3px; }
.row > span { line-height: 16px; }
.g {
  width: 19px; height: 16px;
  display: grid;
  place-items: center;
  background-repeat: no-repeat;
}
.g.v { background-image: repeating-linear-gradient(#999 0 1px, transparent 1px 2px); background-size: 1px 16px; background-position: 9px 0; }
.g.v.h {
  background-image: repeating-linear-gradient(#999 0 1px, transparent 1px 2px), repeating-linear-gradient(90deg, #999 0 1px, transparent 1px 2px);
  background-size: 1px 16px, 10px 1px;
  background-position: 9px 0, 9px 8px;
}
.g.v.h.last { background-size: 1px 8px, 10px 1px; }
.box {
  display: block;
  width: 9px; height: 9px;
  border: 1px solid #808080;
  background: linear-gradient(#000, #000) center / 5px 1px no-repeat, #fff;
}
.box.plus { background: linear-gradient(#000, #000) center / 5px 1px no-repeat, linear-gradient(#000, #000) center / 1px 5px no-repeat, #fff; }

.list {
  display: flex;
  height: 241px;
  background: var(--paper);
  border: 1px solid;
  border-width: 2px 1px 1px 2px;
  border-color: var(--dark) #fff #fff var(--dark);
}
table { border-collapse: separate; border-spacing: 0; table-layout: fixed; width: 100%; }
.list table { flex: 1; width: auto; align-self: flex-start; }
.c-icon { width: 18px; }
.c-src { width: 72px; }
.c-pad { width: 16px; }
th, td { padding: 0; text-align: left; overflow: hidden; white-space: nowrap; line-height: 16px; }
.list th {
  height: 16px;
  padding-left: 5px;
  font-weight: normal;
  line-height: 14px;
  background: var(--face);
  border: 1px solid;
  border-color: #fff var(--dark) var(--dark) #fff;
}
.list td { height: 17px; padding-left: 6px; }
.list td:first-child { padding-left: 3px; }
.list td svg { width: 15px; height: 16px; }
.current td:nth-child(2), .current td:nth-child(3) { background: var(--navy); color: #fff; }

.scroll {
  display: flex;
  flex-direction: column;
  width: 17px;
  background: repeating-conic-gradient(#fff 0 25%, #d4d0c8 0 50%) 0 0 / 2px 2px;
}
.arrow, .thumb {
  display: grid;
  place-items: center;
  height: 17px;
  background: var(--face);
  border: 1px solid;
  border-width: 1px 2px 2px 1px;
  border-color: #fff var(--dark) var(--dark) #fff;
}
.end .thumb { height: 8px; margin: auto 0 2px; }
.thumb.big { height: 27px; margin-bottom: auto; }

.search { display: flex; align-items: center; height: 35px; }
.search input {
  flex: 0 1 409px;
  min-width: 0;
  height: 20px;
  padding-left: 3px;
  background: var(--paper);
  border: 1px solid;
  border-width: 2px 1px 1px 2px;
  border-color: var(--dark) #fff #fff var(--dark);
  outline: 0;
}
.search input::placeholder { color: #808080; font-style: italic; opacity: 1; }

.right {
  display: flex;
  flex-direction: column;
  padding: 2px;
  border: 2px solid var(--line);
  margin-top: -2px;
}
.imgbody { display: flex; height: 221px; }
.radios { display: flex; flex-direction: column; gap: 11px; padding: 13px 0 0 11px; width: 80px; }
.radios label { display: flex; align-items: center; gap: 5px; height: 16px; }
.radios input {
  appearance: none;
  width: 12px; height: 12px;
  border-radius: 50%;
  border: 1px solid;
  border-color: #706d67 #fff #fff #706d67;
  background: #fff;
}
.radios input:checked { background: radial-gradient(circle, #000 2px, #fff 3px); }
.preview { flex: 1; display: flex; flex-direction: column; align-items: center; padding-top: 4px; }
.sphere { width: 60px; height: 62px; margin-right: 12px; }
.name { margin: 15px 0 6px; font: bold 11px/16px "Open Sans", sans-serif; }
.btn {
  width: 96px;
  height: 28px;
  background: var(--face);
  border: 1px solid;
  border-width: 1px 2px 2px 1px;
  border-color: #fff var(--dark) var(--dark) #fff;
}
.btn.edit { width: 104px; }
.btn:disabled { color: #808080; text-shadow: 1px 1px #fff; }
.palette {
  display: grid;
  grid-template-columns: repeat(8, 24px);
  grid-auto-rows: 24px;
  border: 1px solid #20297f;
  border-width: 1px 0 0 1px;
}
.palette button {
  display: grid;
  place-items: center;
  border-right: 1px solid #b4bccd;
  border-bottom: 1px solid #e0dcd4;
  color: #33475e;
  font: 13px/20px Roboto, sans-serif;
}
.palette svg { width: 19px; height: 19px; fill: none; stroke: #222b36; }
.palette svg svg { width: 13px; height: 13px; }
.palette .k { stroke: #10141a; stroke-width: 1.6; }
.palette .n { fill: #e4f2f8; stroke: #1c6595; stroke-width: 1.3; }
.palette .f { fill: #245a94; stroke: #17406e; }
.abc { font: bold 9px "Liberation Sans", sans-serif; fill: #1c2f4c; stroke: none; }
.image .scroll { width: 20px; }

.splitter {
  display: flex;
  justify-content: center;
  align-items: center;
  gap: 2px;
  height: 8px;
  margin: 1px 0 2px;
  background: linear-gradient(#8b909c, #c5c7ce);
  border: 1px solid #7d828d;
}
.splitter i { width: 7px; height: 7px; border-radius: 50%; background: #f6f6f6; }

.props { flex: 1; }
.propbody { flex: 1; display: flex; flex-direction: column; padding: 7px 11px 9px 10px; }
.ptools { display: flex; align-items: center; height: 29px; border-bottom: 1px solid #fff; }
.pt { width: 23px; height: 22px; display: grid; place-items: center; }
.pt svg { width: 20px; height: 20px; }
.pt.on { border: 1px solid; border-color: #808080 #fff #fff #808080; background: #e3e1dc; }
.la { font: bold 10px "Liberation Sans", sans-serif; fill: #3a5fa8; }
.lz { font: bold 10px "Liberation Sans", sans-serif; fill: #a8323a; }
.sep { width: 2px; height: 22px; margin: 0 3px 0 5px; background: #808080; border-right: 1px solid #fff; }
.reset { width: 103px; margin: 0 -2px 0 auto; }
.pgrid { flex: 1; background: var(--paper); border: 1px solid #808080; }
.p-gut { width: 14px; }
.p-name { width: 178px; }
.pgrid th, .pgrid td { height: 17px; line-height: 16px; }
.pgrid th { background: var(--face); }
.pgrid td { padding-left: 3px; border: 1px solid #d4d0c8; border-width: 0 1px 1px 0; }
.pgrid td:last-child { border-right: 0; padding-left: 2px; }
.cat th + th { padding-left: 3px; }
.pgrid .box { margin-left: 2px; border-color: #000; background-color: var(--face); }
.off td { color: #909090; }
.desc { height: 59px; margin-top: 3px; padding: 0 4px; border: 1px solid #808080; font-weight: bold; }

.footer {
  display: flex;
  justify-content: flex-end;
  align-items: flex-start;
  gap: 19px;
  height: 48px;
  padding: 11px 28px 0 0;
}
.round { margin-left: -3px; }
.round svg { width: 20px; height: 20px; }

/* Overlaid marks */
.sign { position: absolute; left: 6px; bottom: 4px; color: #5d5a56; text-shadow: 1px 1px #f2f0ec; }
.script { display: flex; align-items: center; gap: 11px; font-style: italic; font-size: 14px; line-height: 24px; }
.tilt { transform: rotate(-16deg); }
.cad { font: italic 300 24px/24px "Open Sans", sans-serif; }
.site { padding-left: 3px; font: 200 23px/26px "DejaVu Sans", sans-serif; }
.badge {
  position: absolute;
  right: 51px;
  bottom: 20px;
  width: 180px;
  height: 85px;
  display: flex;
  align-items: center;
  gap: 10px;
  padding-left: 14px;
  background: #202f56;
  color: #d0d6e4;
}
.badge svg { width: 36px; height: 36px; }
.badge strong { display: block; font-size: 26px; line-height: 34px; }
.badge span { display: block; font: 13px/14px "DejaVu Sans", sans-serif; }
.grip { position: absolute; right: 2px; bottom: 3px; width: 14px; height: 14px; fill: none; }
```
